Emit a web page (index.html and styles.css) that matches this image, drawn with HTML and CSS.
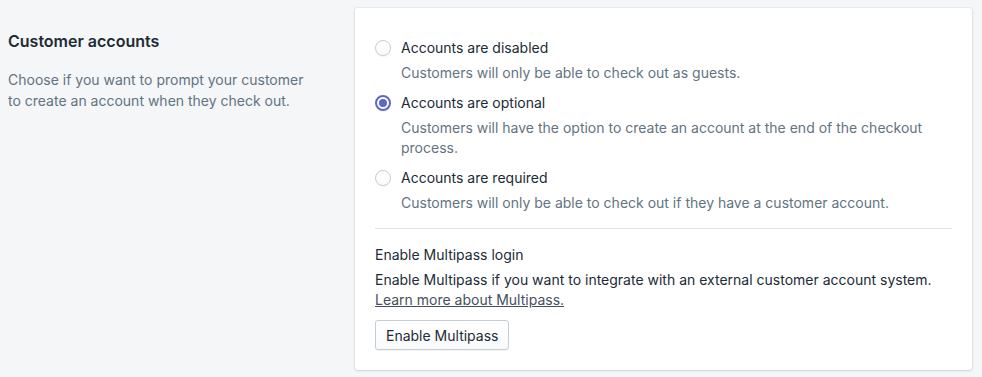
FILE: index.html
```html
<!DOCTYPE html>
<html lang="en">
<head>
  <meta charset="UTF-8" />
  <meta name="viewport" content="width=device-width, initial-scale=1.0" />
  <title>Customer accounts</title>
  <link rel="stylesheet" href="styles.css">
</head>
<body>
  <div class="section">
    <div class="annotation">
      <h2>Customer accounts</h2>
      <p>Choose if you want to prompt your customer to create an account when they check out.</p>
    </div>

    <div class="card">
      <div class="choice-list">
        <label class="choice">
          <span class="radio"></span>
          <span class="choice-label">Accounts are disabled</span>
        </label>
        <p class="help">Customers will only be able to check out as guests.</p>

        <label class="choice">
          <span class="radio checked"></span>
          <span class="choice-label">Accounts are optional</span>
        </label>
        <p class="help">Customers will have the option to create an account at the end of the checkout process.</p>

        <label class="choice">
          <span class="radio"></span>
          <span class="choice-label">Accounts are required</span>
        </label>
        <p class="help">Customers will only be able to check out if they have a customer account.</p>
      </div>

      <div class="multipass">
        <h3>Enable Multipass login</h3>
        <p>Enable Multipass if you want to integrate with an external customer account system.<br>
          <a href="#">Learn more about Multipass.</a></p>
        <button>Enable Multipass</button>
      </div>
    </div>
  </div>
</body>
</html>
```

FILE: styles.css
```css
body {
  margin: 0;
  background-color: #f4f6f8;
  color: #212b36;
  font-family: Inter, "Noto Sans", sans-serif;
  font-size: 14px;
}
.section {
  display: flex;
  padding: 8px 10px 8px 8px;
  gap: 20px;
}
.annotation {
  width: 327px;
  flex-shrink: 0;
}
.annotation h2 {
  margin: 21px 0 0;
  font-size: 16px;
  font-weight: 600;
  line-height: 24px;
}
.annotation p {
  max-width: 305px;
  margin: 16px 0 0;
  color: #637381;
  line-height: 21px;
}
.card {
  flex: 1;
  background: #fff;
  border-radius: 3px;
  box-shadow: 0 0 0 1px rgba(63, 63, 68, 0.05), 0 1px 3px 0 rgba(63, 63, 68, 0.15);
  padding: 30px 20px 20px;
}
.choice-list {
  padding-bottom: 15px;
  border-bottom: 1px solid #dfe3e8;
}
.choice {
  display: flex;
  align-items: center;
  gap: 10px;
  line-height: 20px;
  margin-top: 10px;
}
.choice:first-child {
  margin-top: 0;
}
.radio {
  width: 16px;
  height: 16px;
  box-sizing: border-box;
  border-radius: 50%;
  border: 1px solid #c4cdd5;
  background: linear-gradient(#fff, #f9fafb);
  box-shadow: 0 1px 0 rgba(22, 29, 37, 0.05);
  display: flex;
  align-items: center;
  justify-content: center;
}
.radio.checked {
  border: 2px solid #5c6ac4;
}
.radio.checked::after {
  content: "";
  width: 8px;
  height: 8px;
  border-radius: 50%;
  background: #5c6ac4;
}
.help {
  margin: 5px 0 0 26px;
  color: #637381;
  line-height: 20px;
}
.multipass {
  padding-top: 16px;
}
.multipass h3 {
  margin: 0;
  font-size: 14px;
  font-weight: normal;
  line-height: 20px;
}
.multipass p {
  margin: 5px 0 0;
  line-height: 20px;
}
.multipass a {
  color: #454f5b;
  text-decoration: underline;
}
button {
  margin-top: 10px;
  height: 30px;
  padding: 0 10px;
  font-family: Inter, "Noto Sans", sans-serif;
  font-size: 14px;
  color: #212b36;
  background: linear-gradient(#fff, #f9fafb);
  border: 1px solid #c4cdd5;
  border-radius: 3px;
  box-shadow: 0 1px 0 rgba(22, 29, 37, 0.05);
}
```
